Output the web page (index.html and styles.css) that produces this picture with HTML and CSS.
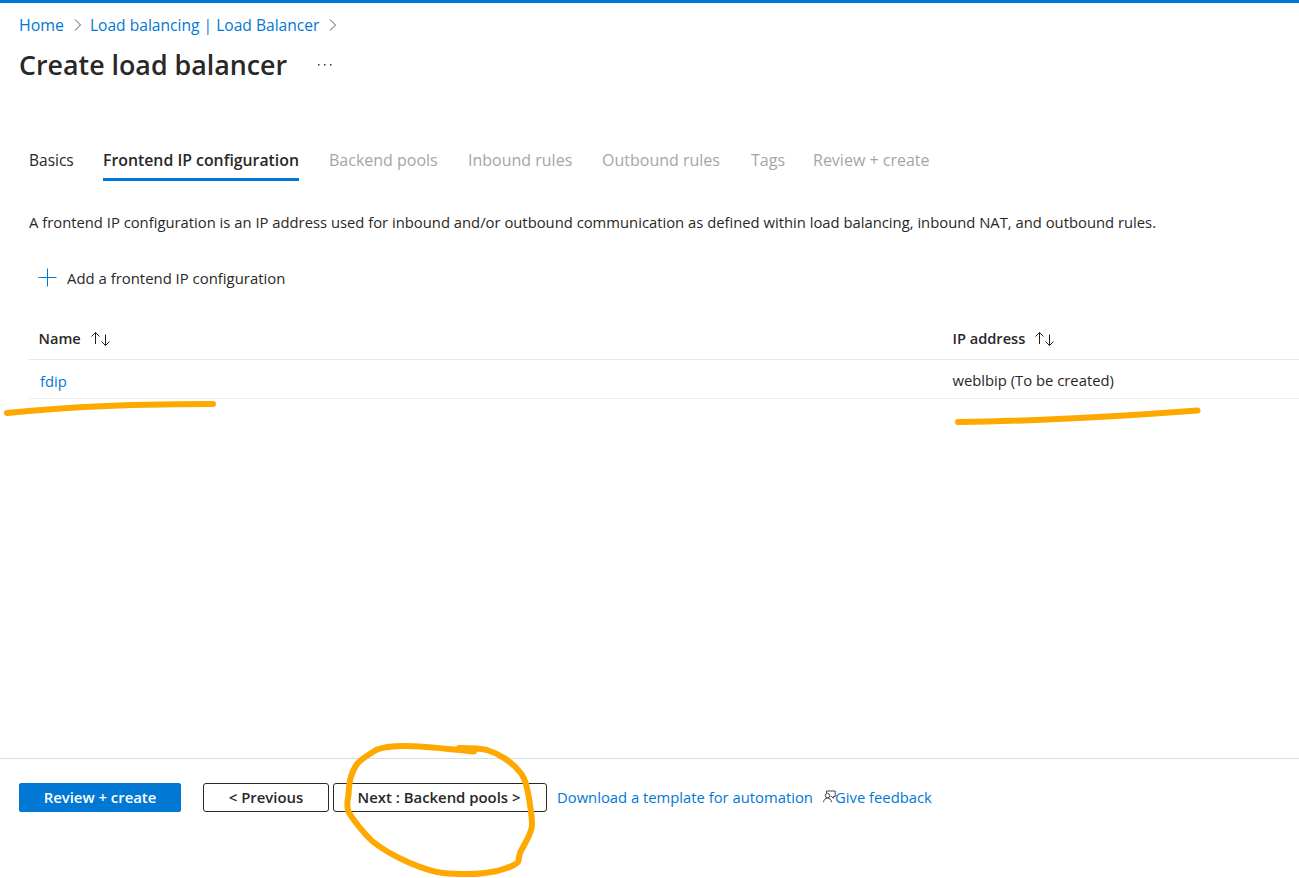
FILE: index.html
```html
<!DOCTYPE html>
<html lang="en">
<head>
<meta charset="utf-8">
<title>Create load balancer</title>
<link rel="stylesheet" href="styles.css">
</head>
<body>
<div class="page">
  <header class="head">
    <nav class="crumbs">
      <a class="home">Home</a>
      <svg class="chev" width="8" height="14" viewBox="0 0 8 14"><path d="M1 1.5 6.5 7 1 12.5"/></svg>
      <a>Load balancing | Load Balancer</a>
      <svg class="chev" width="8" height="14" viewBox="0 0 8 14"><path d="M1 1.5 6.5 7 1 12.5"/></svg>
    </nav>
    <div class="title-row">
      <h1>Create load balancer</h1>
      <svg class="more" width="14" height="2" viewBox="0 0 14 2"><path d="M0 0h1.500v1.500H0zM6 0h1.500v1.500H6zM12 0h1.500v1.500H12z"/></svg>
    </div>
  </header>
  <main class="main">
    <nav class="tabs">
      <a class="tab done">Basics</a>
      <a class="tab active">Frontend IP configuration</a>
      <a class="tab pools">Backend pools</a>
      <a class="tab inbound">Inbound rules</a>
      <a class="tab outbound">Outbound rules</a>
      <a class="tab tags">Tags</a>
      <a class="tab">Review + create</a>
    </nav>
    <p class="intro">A frontend IP configuration is an IP address used for inbound and/or outbound communication as defined within load balancing, inbound NAT, and outbound rules.</p>
    <div class="add">
      <svg width="19" height="19" viewBox="0 0 19 19"><path d="M9.500 0.500v18M0.500 9.500h18"/></svg>
      <span>Add a frontend IP configuration</span>
    </div>
    <div class="table">
      <div class="row header">
        <div class="cell">Name
          <svg class="sort" width="20" height="16" viewBox="0 0 20 16"><path d="M5.500 13V1.500M1.500 5.500 5.500 1.500 9.500 5.500M15.500 3.500V14.500M11.500 10.500 15.500 14.500 19.500 10.500"/></svg>
        </div>
        <div class="cell">IP address
          <svg class="sort" width="20" height="16" viewBox="0 0 20 16"><path d="M5.500 13V1.500M1.500 5.500 5.500 1.500 9.500 5.500M15.500 3.500V14.500M11.500 10.500 15.500 14.500 19.500 10.500"/></svg>
        </div>
      </div>
      <div class="row item">
        <div class="cell link"><a>fdip</a></div>
        <div class="cell">weblbip (To be created)</div>
      </div>
    </div>
  </main>
  <footer class="foot">
    <button class="btn primary">Review + create</button>
    <button class="btn prev">&lt; Previous</button>
    <button class="btn next">Next : Backend pools &gt;</button>
    <a class="download">Download a template for automation</a>
    <a class="feedback"><svg width="13" height="13" viewBox="0 0 13 13"><path d="M3.500 3V1H12.200V6.500H10.300V8.300L8.500 6.500H7.600"/><circle cx="4.500" cy="5.600" r="2.200"/><path d="M.6 12.200C.8 9.600 2.400 8.100 4.500 8.100S8.200 9.600 8.600 12.200"/></svg>Give feedback</a>
  </footer>
  <svg class="ink" width="1299" height="878" viewBox="0 0 1299 878">
    <path d="M7 413C70 407 110 404.500 213 404"/>
    <path d="M958 422C1040 421 1110 417 1197.500 410.500"/>
    <path d="M474 751.500C448 749 425 746 404 746C392 746 383 747 376 750C368 755 361 759 357 764C350 774 349 784 348.500 795C347 802 347 808 348.500 812C354 821 363 832 372 841C382 849 396 857 410 863C422 868 432 872 443 873C453 874 458 874 467 874C478 874 488 873 497 871C507 868 517 865 518.500 861C519 855 520 852 522 849C527 840 532 832 532 825C532 814 530 806 529 798C527 787 525 777 519 771C511 761 497 753 487 750C479 748 470 748 459 748"/>
  </svg>
</div>
</body>
</html>
```
FILE: styles.css
```css
* { box-sizing: border-box; }
body {
  margin: 0;
  background: #fff;
  color: #292827;
  font: 14.8px/20px "Open Sans", "Noto Sans", sans-serif;
}
svg { fill: none; flex: none; }
a { color: #0078d4; }
.page {
  position: relative;
  display: flex;
  flex-direction: column;
  width: 1299px;
  height: 878px;
  overflow: hidden;
  border-top: 3px solid #0078d4;
}
.head { padding: 12px 0 0 19px; height: 147px; }
.crumbs { display: flex; align-items: center; font-size: 15.6px; height: 20px; }
.crumbs a { white-space: nowrap; }
.crumbs .home { font-size: 15.9px; }
.chev { stroke: #555; margin: 0 8px 0 10px; }
.title-row { display: flex; align-items: center; margin-top: 11px; }
h1 { margin: 0; font-size: 26.8px; line-height: 38px; font-weight: 600; }
.more { fill: #333; margin-left: 31px; }
.main { flex: 1; padding-left: 29px; }
.tabs { display: flex; font-size: 16px; height: 31px; }
.tab { color: #a6a5a4; white-space: nowrap; border-bottom: 3px solid transparent; margin-right: 29px; }
.tab.done { color: #292827; width: 45px; font-size: 15.5px; }
.tab.active { color: #292827; width: 196px; font-size: 15.83px; font-weight: 600; border-color: #0078d4; }
.tab.pools { width: 110px; }
.tab.inbound { width: 105px; }
.tab.outbound { width: 120px; }
.tab.tags { width: 33px; }
.tab.active + .tab { margin-left: 1px; }
.intro { margin: 31px 0 0; white-space: nowrap; }
.add { display: flex; align-items: flex-start; gap: 10px; margin-top: 36px; padding-left: 9px; height: 20px; font-size: 14.9px; }
.add svg { stroke: #0078d4; }
.table { margin-top: 40px; }
.row { display: grid; grid-template-columns: 914px 1fr; }
.header { height: 32px; border-bottom: 1px solid #e6e6e6; font-weight: 600; font-size: 14.6px; }
.item { height: 39px; padding-top: 10px; border-bottom: 1px solid #efefef; }
.cell { display: flex; gap: 9px; padding-left: 9.5px; height: 20px; }
.cell.link { padding: 1px 0 0 11px; }
.sort { stroke: #201f1e; margin-top: 3px; }
.foot { display: flex; height: 120px; padding: 24px 0 0 19px; border-top: 1px solid #dcdcdc; line-height: 29px; }
.btn {
  height: 29px;
  padding: 0;
  border: 1px solid #292827;
  border-radius: 3px;
  background: #fff;
  color: #292827;
  font: 600 14.9px/27px "Open Sans", "Noto Sans", sans-serif;
}
.primary { width: 162px; background: #0078d4; border-color: #0078d4; border-radius: 2px; color: #fff; }
.prev { width: 126px; margin-left: 22px; }
.next { width: 214px; margin-left: 4px; padding-right: 2px; }
.download { margin-left: 10px; width: 266px; white-space: nowrap; }
.feedback { display: flex; white-space: nowrap; }
.feedback svg { stroke: #444; margin-top: 7px; margin-right: -1px; }
.ink { position: absolute; left: 0; top: -3px; stroke: #ffa800; stroke-width: 6; stroke-linecap: round; stroke-linejoin: round; pointer-events: none; }
```
